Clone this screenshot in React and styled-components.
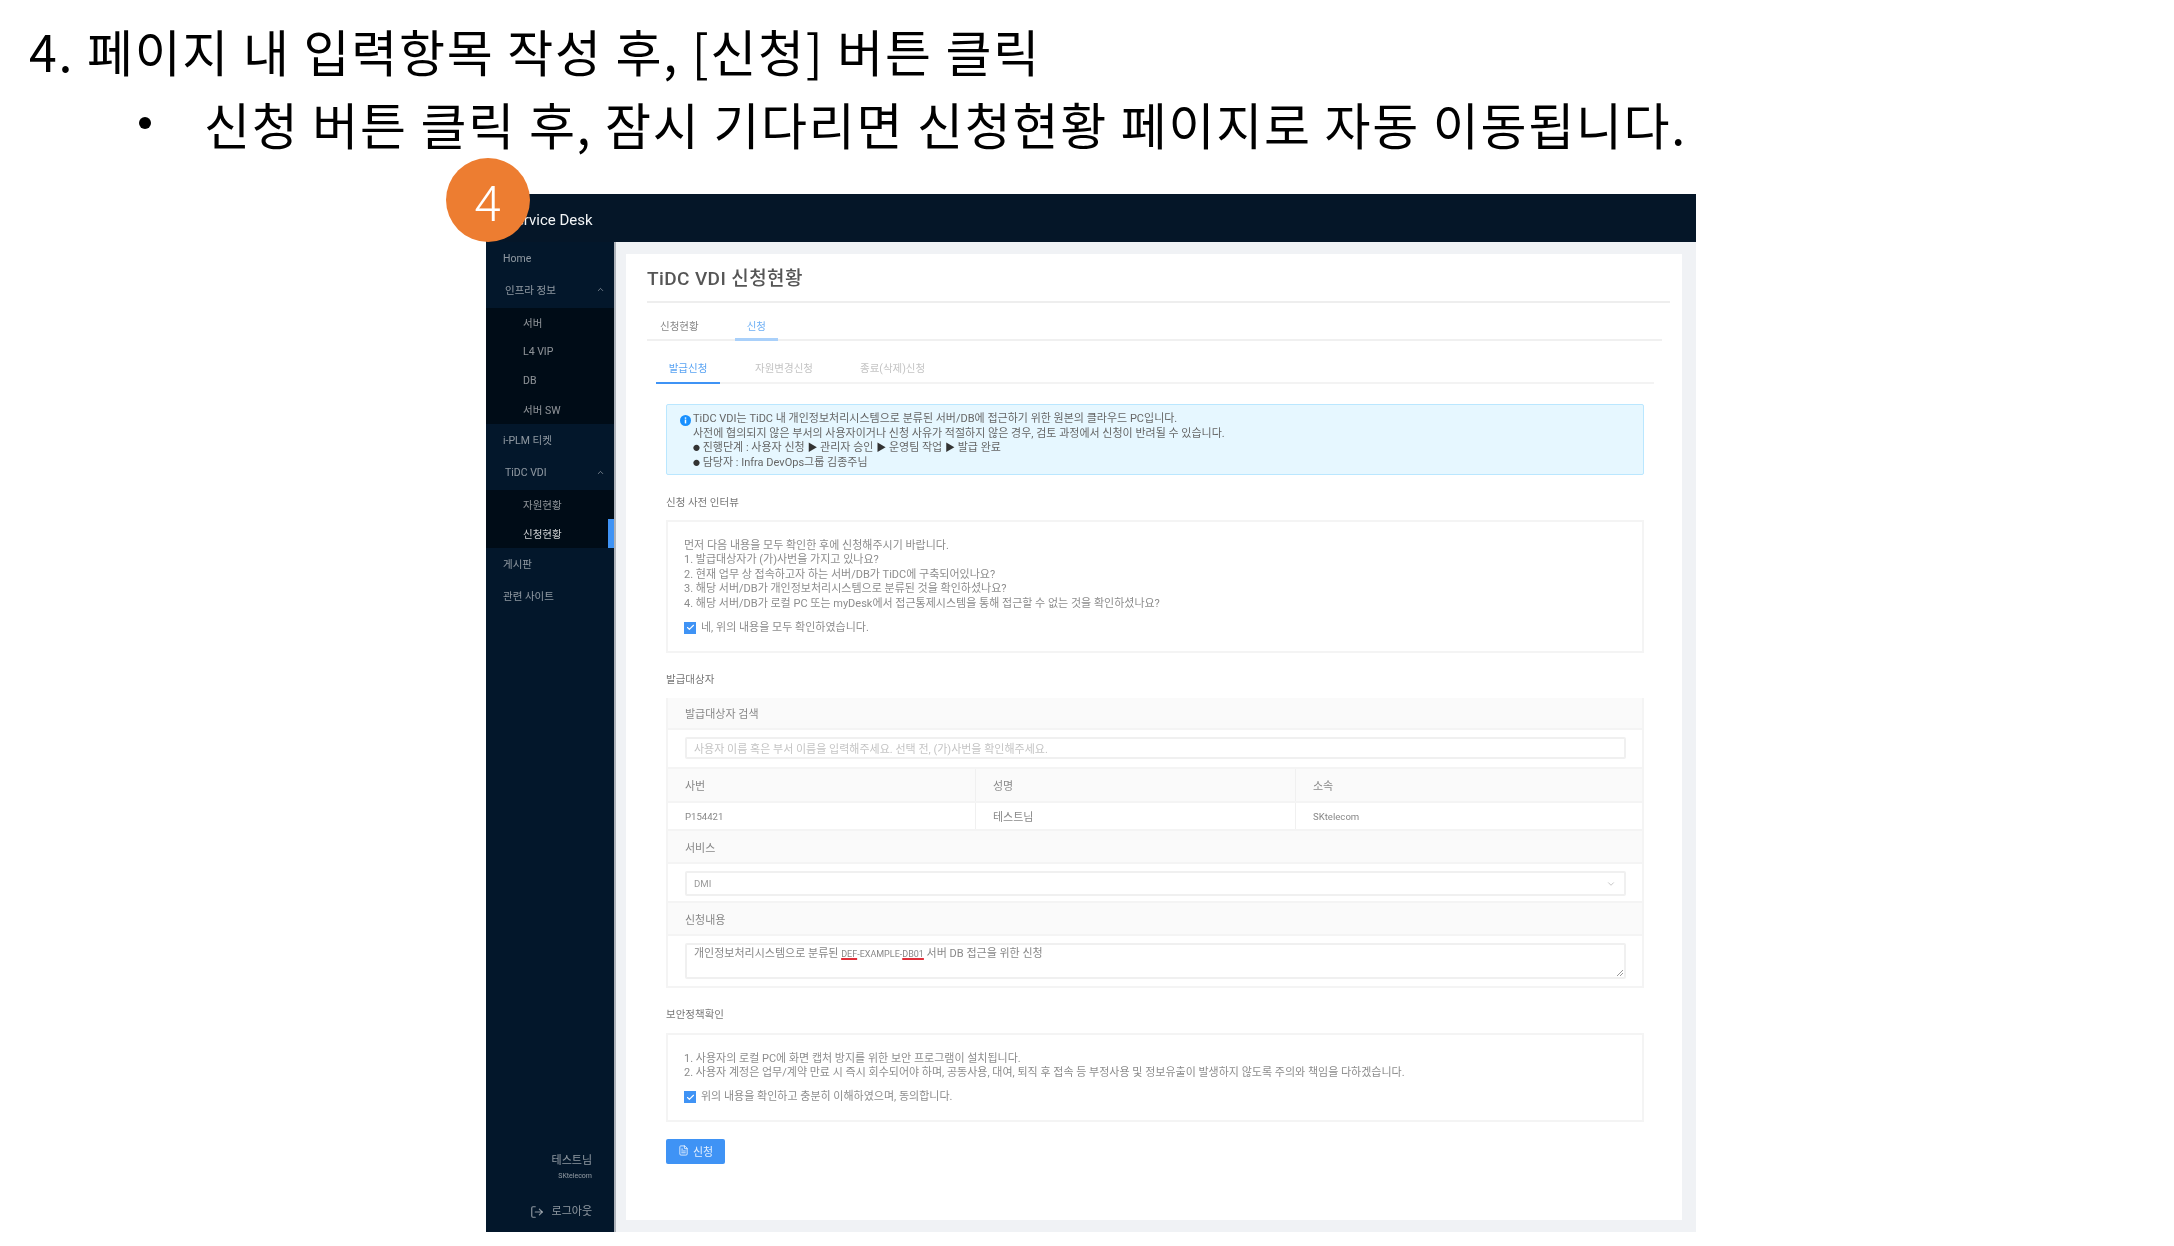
import React from 'react';
import styled, { createGlobalStyle } from 'styled-components';
import { ChevronUp, ChevronDown, LogOut, Check, FileText } from 'lucide-react';

const MENU_FONT = '"Roboto", "Noto Sans CJK KR", sans-serif';

const GlobalStyle = createGlobalStyle`
    html, body {
        margin: 0;
        padding: 0;
        background: white;
    }
    * {
        box-sizing: border-box;
    }
`;

const App = () => {
    return (
        <Page>
            <GlobalStyle />
            <Heading>4. 페이지 내 입력항목 작성 후, [신청] 버튼 클릭</Heading>
            <BulletRow>
                <Bullet />
                <BulletText>신청 버튼 클릭 후, 잠시 기다리면 신청현황 페이지로 자동 이동됩니다.</BulletText>
            </BulletRow>
            <Shot>
                <StepBadge>4</StepBadge>
                <TopBar>Service Desk</TopBar>
                <Body>
                    <Sidebar>
                        <MenuList>
                            <MenuItem $h={32}>Home</MenuItem>
                            <MenuGroup $h={34}>
                                인프라 정보
                                <ChevronUp size={9} />
                            </MenuGroup>
                            <SubMenu>
                                <SubItem>서버</SubItem>
                                <SubItem>L4 VIP</SubItem>
                                <SubItem>DB</SubItem>
                                <SubItem>서버 SW</SubItem>
                            </SubMenu>
                            <MenuItem $h={31}>i-PLM 티켓</MenuItem>
                            <MenuGroup $h={35} $low>
                                TiDC VDI
                                <ChevronUp size={9} />
                            </MenuGroup>
                            <SubMenu>
                                <SubItem>자원현황</SubItem>
                                <SubItem $active>신청현황</SubItem>
                            </SubMenu>
                            <MenuItem $h={31}>게시판</MenuItem>
                            <MenuItem $h={33}>관련 사이트</MenuItem>
                        </MenuList>
                        <UserBlock>
                            <UserName>테스트님</UserName>
                            <UserOrg>SKtelecom</UserOrg>
                            <LogoutRow>
                                <LogOut size={14} />
                                로그아웃
                            </LogoutRow>
                        </UserBlock>
                    </Sidebar>
                    <Content>
                        <Card>
                            <Title>TiDC VDI 신청현황</Title>
                            <Tabs>
                                <Tab>신청현황</Tab>
                                <Tab $active>신청</Tab>
                            </Tabs>
                            <Panel>
                                <SubTabs>
                                    <SubTab $active>발급신청</SubTab>
                                    <SubTab>자원변경신청</SubTab>
                                    <SubTab>종료(삭제)신청</SubTab>
                                </SubTabs>
                                <Form>
                                    <Alert>
                                        <AlertIcon viewBox="0 0 12 12">
                                            <circle cx="6" cy="6" r="6" fill="#1890ff" />
                                            <rect x="5.2" y="5" width="1.6" height="4.2" fill="white" />
                                            <rect x="5.2" y="2.6" width="1.6" height="1.5" fill="white" />
                                        </AlertIcon>
                                        <div>
                                            <AlertLine>TiDC VDI는 TiDC 내 개인정보처리시스템으로 분류된 서버/DB에 접근하기 위한 원본의 클라우드 PC입니다.</AlertLine>
                                            <AlertLine>사전에 협의되지 않은 부서의 사용자이거나 신청 사유가 적절하지 않은 경우, 검토 과정에서 신청이 반려될 수 있습니다.</AlertLine>
                                            <AlertLine><Mark>●</Mark> 진행단계 : 사용자 신청 <Mark $arrow>▶</Mark> 관리자 승인 <Mark $arrow>▶</Mark> 운영팀 작업 <Mark $arrow>▶</Mark> 발급 완료</AlertLine>
                                            <AlertLine><Mark>●</Mark> 담당자 : Infra DevOps그룹 김종주님</AlertLine>
                                        </div>
                                    </Alert>
                                    <SectionLabel>신청 사전 인터뷰</SectionLabel>
                                    <NoticeBox $h={133}>
                                        <NoticeLine>먼저 다음 내용을 모두 확인한 후에 신청해주시기 바랍니다.</NoticeLine>
                                        <NoticeLine>1. 발급대상자가 (가)사번을 가지고 있나요?</NoticeLine>
                                        <NoticeLine>2. 현재 업무 상 접속하고자 하는 서버/DB가 TiDC에 구축되어있나요?</NoticeLine>
                                        <NoticeLine>3. 해당 서버/DB가 개인정보처리시스템으로 분류된 것을 확인하셨나요?</NoticeLine>
                                        <NoticeLine>4. 해당 서버/DB가 로컬 PC 또는 myDesk에서 접근통제시스템을 통해 접근할 수 없는 것을 확인하셨나요?</NoticeLine>
                                        <CheckRow>
                                            <CheckBox><Check size={9} color="white" strokeWidth={3} /></CheckBox>
                                            네, 위의 내용을 모두 확인하였습니다.
                                        </CheckRow>
                                    </NoticeBox>
                                    <SectionLabel $tight>발급대상자</SectionLabel>
                                    <Table>
                                        <HeadRow $h={32}>발급대상자 검색</HeadRow>
                                        <FieldRow $h={39}>
                                            <Field $h={22} $muted>사용자 이름 혹은 부서 이름을 입력해주세요. 선택 전, (가)사번을 확인해주세요.</Field>
                                        </FieldRow>
                                        <Columns $head>
                                            <Cell>사번</Cell>
                                            <Cell>성명</Cell>
                                            <Cell>소속</Cell>
                                        </Columns>
                                        <Columns>
                                            <Cell $latin>P154421</Cell>
                                            <Cell>테스트님</Cell>
                                            <Cell $latin>SKtelecom</Cell>
                                        </Columns>
                                        <HeadRow $h={33}>서비스</HeadRow>
                                        <FieldRow $h={39}>
                                            <Field $h={25}>
                                                DMI
                                                <ChevronDown size={10} color="#bbb" />
                                            </Field>
                                        </FieldRow>
                                        <HeadRow $h={33}>신청내용</HeadRow>
                                        <FieldRow $h={50}>
                                            <TextArea>
                                                개인정보처리시스템으로 분류된 <LatinRun><Misspelt>DEF</Misspelt>-EXAMPLE-<Misspelt>DB01</Misspelt></LatinRun> 서버 DB 접근을 위한 신청
                                                <ResizeHandle viewBox="0 0 8 8">
                                                    <path d="M1 7 L7 1 M4 7 L7 4" stroke="#999" fill="none" />
                                                </ResizeHandle>
                                            </TextArea>
                                        </FieldRow>
                                    </Table>
                                    <SectionLabel $tight>보안정책확인</SectionLabel>
                                    <NoticeBox $h={89}>
                                        <NoticeLine>1. 사용자의 로컬 PC에 화면 캡처 방지를 위한 보안 프로그램이 설치됩니다.</NoticeLine>
                                        <NoticeLine>2. 사용자 계정은 업무/계약 만료 시 즉시 회수되어야 하며, 공동사용, 대여, 퇴직 후 접속 등 부정사용 및 정보유출이 발생하지 않도록 주의와 책임을 다하겠습니다.</NoticeLine>
                                        <CheckRow>
                                            <CheckBox><Check size={9} color="white" strokeWidth={3} /></CheckBox>
                                            위의 내용을 확인하고 충분히 이해하였으며, 동의합니다.
                                        </CheckRow>
                                    </NoticeBox>
                                    <SubmitButton>
                                        <FileText size={11} />
                                        신청
                                    </SubmitButton>
                                </Form>
                            </Panel>
                        </Card>
                    </Content>
                </Body>
            </Shot>
        </Page>
    );
};

const Page = styled.div`
    width: 2174px;
    height: 1246px;
    overflow: hidden;
    background: white;
    color: black;
    font-family: "Noto Sans CJK KR", "Liberation Sans", sans-serif;
`;

const Heading = styled.h1`
    margin: 0;
    padding-left: 29px;
    height: 80px;
    padding-top: 15px;
    font-size: 50px;
    line-height: 70px;
    font-weight: 400;
    letter-spacing: 1.7px;
    white-space: nowrap;
`;

const BulletRow = styled.div`
    display: flex;
    align-items: center;
    height: 86px;
    padding-left: 139px;
`;

const Bullet = styled.span`
    width: 12px;
    height: 12px;
    border-radius: 50%;
    background: black;
    margin-right: 53px;
`;

const BulletText = styled.span`
    font-size: 50px;
    font-weight: 400;
    letter-spacing: 1.7px;
    white-space: nowrap;
`;

const Shot = styled.div`
    position: relative;
    margin: 28px 0 0 486px;
    width: 1210px;
    height: 1038px;
    display: flex;
    flex-direction: column;
    background: #f0f2f5;
    font-family: ${MENU_FONT};
`;

const StepBadge = styled.div`
    position: absolute;
    left: -40px;
    top: -36px;
    width: 84px;
    height: 84px;
    border-radius: 50%;
    background: #ed7d31;
    color: white;
    display: flex;
    align-items: center;
    justify-content: center;
    padding-bottom: 2px;
    font-family: "Noto Sans CJK KR", sans-serif;
    font-size: 50px;
    font-weight: 300;
    z-index: 2;
`;

const TopBar = styled.div`
    height: 48px;
    flex: none;
    background: #051628;
    color: #f2f4f6;
    font-size: 15px;
    line-height: 52px;
    padding-left: 21px;
    filter: blur(0.3px);
`;

const Body = styled.div`
    flex: 1;
    display: flex;
    min-height: 0;
`;

const Sidebar = styled.nav`
    width: 130px;
    flex: none;
    display: flex;
    flex-direction: column;
    justify-content: space-between;
    background: #03172b;
    border-right: 2px solid #aeb3ba;
    color: rgba(255, 255, 255, 0.55);
    font-size: 10.5px;
    filter: blur(0.55px);
`;

const MenuList = styled.div`
    display: flex;
    flex-direction: column;
`;

const MenuItem = styled.div`
    height: ${props => props.$h}px;
    display: flex;
    align-items: center;
    padding-left: 17px;
`;

const MenuGroup = styled(MenuItem)`
    justify-content: space-between;
    padding: ${props => (props.$low ? '0 9px 0 19px' : '0 9px 3px 19px')};
`;

const SubMenu = styled.div`
    background: #000c17;
    display: flex;
    flex-direction: column;
`;

const SubItem = styled.div`
    position: relative;
    height: 29px;
    display: flex;
    align-items: center;
    padding-left: 37px;
    color: ${props => (props.$active ? 'rgba(255, 255, 255, 0.8)' : 'rgba(255, 255, 255, 0.55)')};

    ${props =>
        props.$active &&
        `
        &::after {
            content: '';
            position: absolute;
            right: 0;
            top: 0;
            bottom: 0;
            width: 6px;
            background: #3f93f5;
        }
    `}
`;

const UserBlock = styled.div`
    display: flex;
    flex-direction: column;
    align-items: flex-end;
    padding: 0 22px 10px 0;
`;

const UserName = styled.div`
    font-size: 11px;
    line-height: 16px;
`;

const UserOrg = styled.div`
    font-size: 7px;
    line-height: 15px;
    margin-bottom: 18px;
`;

const LogoutRow = styled.div`
    display: flex;
    align-items: center;
    gap: 8px;
    font-size: 11px;
    line-height: 20px;
`;

const Content = styled.main`
    flex: 1;
    min-width: 0;
    padding: 12px 14px 12px 10px;
    display: flex;
`;

const Card = styled.section`
    flex: 1;
    background: white;
    padding: 0 12px 0 21px;
    display: flex;
    flex-direction: column;
    filter: blur(0.55px);
    color: #777;
`;

const Title = styled.h2`
    margin: 0;
    height: 49px;
    flex: none;
    font-size: 19px;
    letter-spacing: 0.4px;
    font-weight: 500;
    line-height: 50px;
    color: #555;
    border-bottom: 2px solid #eeeeee;
`;

const Tabs = styled.div`
    height: 38px;
    flex: none;
    margin-right: 8px;
    display: flex;
    border-bottom: 2px solid #f0f0f0;
    padding-left: 1px;
    font-size: 10.5px;
`;

const Tab = styled.div`
    height: 38px;
    padding: 10px 12px 0;
    margin-right: 24px;
    display: flex;
    align-items: center;
    color: ${props => (props.$active ? '#6fb0f5' : '#888')};
    border-bottom: 3px solid ${props => (props.$active ? '#a9d0fa' : 'transparent')};
`;

const Panel = styled.div`
    flex: 1;
    padding: 0 16px 0 9px;
    display: flex;
    flex-direction: column;
`;

const SubTabs = styled.div`
    height: 43px;
    flex: none;
    display: flex;
    border-bottom: 2px solid #f3f3f3;
    font-size: 10.5px;
`;

const SubTab = styled.div`
    height: 43px;
    width: ${props => (props.$active ? '64px' : 'auto')};
    margin-right: ${props => (props.$active ? '35px' : '47px')};
    display: flex;
    align-items: center;
    justify-content: center;
    padding-top: 12px;
    color: ${props => (props.$active ? '#5ba4f3' : '#c4c4c4')};
    border-bottom: 2px solid ${props => (props.$active ? '#3f93f5' : 'transparent')};
`;

const Form = styled.div`
    display: flex;
    flex-direction: column;
    padding: 20px 10px 0 10px;
`;

const Alert = styled.div`
    height: 71px;
    display: flex;
    gap: 2px;
    padding: 7px 0 0 13px;
    background: #e6f7ff;
    border: 1px solid #bae7ff;
    border-radius: 2px;
    font-size: 11px;
    color: #666;
`;

const AlertIcon = styled.svg`
    width: 11px;
    height: 11px;
    margin-top: 3px;
    flex: none;
`;

const AlertLine = styled.div`
    line-height: 14.5px;
    white-space: nowrap;
`;

const Mark = styled.span`
    font-size: ${props => (props.$arrow ? '10px' : '7px')};
    vertical-align: ${props => (props.$arrow ? '0' : '1px')};
    color: #333;
`;

const SectionLabel = styled.div`
    flex: none;
    padding: ${props => (props.$tight ? '19px 0 10px' : '20px 0 9px')};
    font-size: 10.5px;
    line-height: 16px;
    color: #777;
`;

const NoticeBox = styled.div`
    height: ${props => props.$h}px;
    flex: none;
    border: 2px solid #f4f4f4;
    padding: 16.5px 16px 0;
    font-size: 11px;
    color: #8c8c8c;
`;

const NoticeLine = styled.div`
    line-height: 14.6px;
    white-space: nowrap;
`;

const CheckRow = styled.label`
    display: flex;
    align-items: center;
    gap: 5px;
    margin-top: 10.5px;
    line-height: 12px;
`;

const CheckBox = styled.span`
    width: 12px;
    height: 12px;
    background: #3f93f5;
    display: flex;
    align-items: center;
    justify-content: center;
`;

const Table = styled.div`
    flex: none;
    border: 2px solid #f4f4f4;
    border-top: 0;
    font-size: 11px;
    color: #888;
`;

const HeadRow = styled.div`
    height: ${props => props.$h}px;
    display: flex;
    align-items: center;
    padding-left: 17px;
    background: #fafafa;
    border-bottom: 2px solid #f4f4f4;
`;

const FieldRow = styled.div`
    height: ${props => props.$h}px;
    padding: 7px 16px 0 17px;
    border-bottom: 2px solid #f4f4f4;

    &:last-child {
        border-bottom: 0;
    }
`;

const Field = styled.div`
    height: ${props => props.$h}px;
    border: 2px solid #f0f0f0;
    border-radius: 2px;
    display: flex;
    align-items: center;
    justify-content: space-between;
    padding: 0 8px 0 7px;
    font-size: ${props => (props.$muted ? '11px' : '9.6px')};
    color: ${props => (props.$muted ? '#c4c4c4' : '#999')};
`;

const Columns = styled.div`
    display: grid;
    grid-template-columns: 307px 320px 1fr;
    height: ${props => (props.$head ? '34px' : '28px')};
    background: ${props => (props.$head ? '#fafafa' : 'white')};
    border-bottom: 2px solid #f4f4f4;
    align-items: stretch;
`;

const Cell = styled.div`
    display: flex;
    align-items: center;
    padding-left: 17px;
    font-size: ${props => (props.$latin ? '9.6px' : '11px')};

    & + & {
        border-left: 1px solid #f0f0f0;
    }
`;

const TextArea = styled.div`
    position: relative;
    height: 36px;
    border: 2px solid #f0f0f0;
    border-radius: 2px;
    padding: 2px 7px;
    line-height: 14px;
    color: #888;
`;

const LatinRun = styled.span`
    font-size: 9px;
`;

const Misspelt = styled.span`
    text-decoration: underline;
    text-decoration-color: #e0303a;
    text-decoration-thickness: 1.5px;
    text-underline-offset: 1px;
`;

const ResizeHandle = styled.svg`
    position: absolute;
    right: 0;
    bottom: 0;
    width: 8px;
    height: 8px;
`;

const SubmitButton = styled.button`
    align-self: flex-start;
    width: 59px;
    height: 25px;
    margin-top: 17px;
    padding: 0 0 2px;
    border: 0;
    border-radius: 2px;
    background: #3f93f5;
    color: rgba(255, 255, 255, 0.85);
    display: flex;
    align-items: center;
    justify-content: center;
    gap: 4px;
    font-family: ${MENU_FONT};
    font-size: 11px;
`;

export default App;
